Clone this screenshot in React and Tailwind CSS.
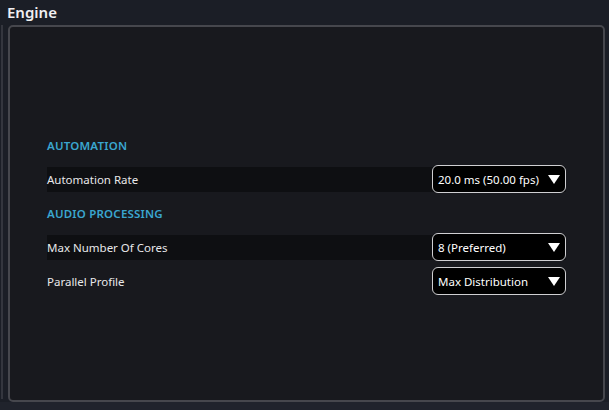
import React from "react";

function Dropdown({ value }) {
  return (
    <div className="w-[134px] h-[28px] shrink-0 flex items-center justify-between rounded-[6px] border-[1.5px] border-[#cfcfd2] bg-black pl-[5px] pr-[5px] text-[11.5px] text-white">
      <span className="leading-none pt-[1px]">{value}</span>
      <svg width="12" height="9" viewBox="0 0 12 9">
        <polygon points="0,0 12,0 6,9" fill="#ffffff" />
      </svg>
    </div>
  );
}

function Header({ children }) {
  return (
    <div className="h-[34px] flex items-center pt-[1px] text-[11.5px] font-semibold text-[#3aa6cf] tracking-[0.2px]">
      {children}
    </div>
  );
}

function Row({ label, value, striped }) {
  return (
    <div className="h-[34px] flex items-center">
      <div className={"h-[25px] flex-1 flex items-center justify-between " + (striped ? "bg-[#0e0f12]" : "")}>
        <span className="text-[11.5px] pt-[1px] text-[#e8e8ea]">{label}</span>
        <Dropdown value={value} />
      </div>
    </div>
  );
}

export default function App() {
  return (
    <div
      className="w-[609px] h-[410px] bg-[#1b1e26] flex flex-col overflow-hidden"
      style={{ fontFamily: '"Noto Sans", "Open Sans", sans-serif' }}
    >
      <div className="h-[25px] pl-[7px] flex items-center text-[15px] font-semibold text-[#f0f0f2]">
        Engine
      </div>
      <div className="flex h-[377px]">
        <div className="w-[2px] ml-[1px] h-[374px] bg-[#34363e]" />
        <div className="ml-[5px] w-[597px] h-[377px] rounded-[5px] border-2 border-[#46474d] bg-[#18191e] pt-[101px] pl-[37px] pr-[37px]">
          <Header>AUTOMATION</Header>
          <Row label="Automation Rate" value="20.0 ms (50.00 fps)" striped />
          <Header>AUDIO PROCESSING</Header>
          <Row label="Max Number Of Cores" value="8 (Preferred)" striped />
          <Row label="Parallel Profile" value="Max Distribution" />
        </div>
      </div>
      <div className="flex-1 bg-[#20232c]" />
    </div>
  );
}
